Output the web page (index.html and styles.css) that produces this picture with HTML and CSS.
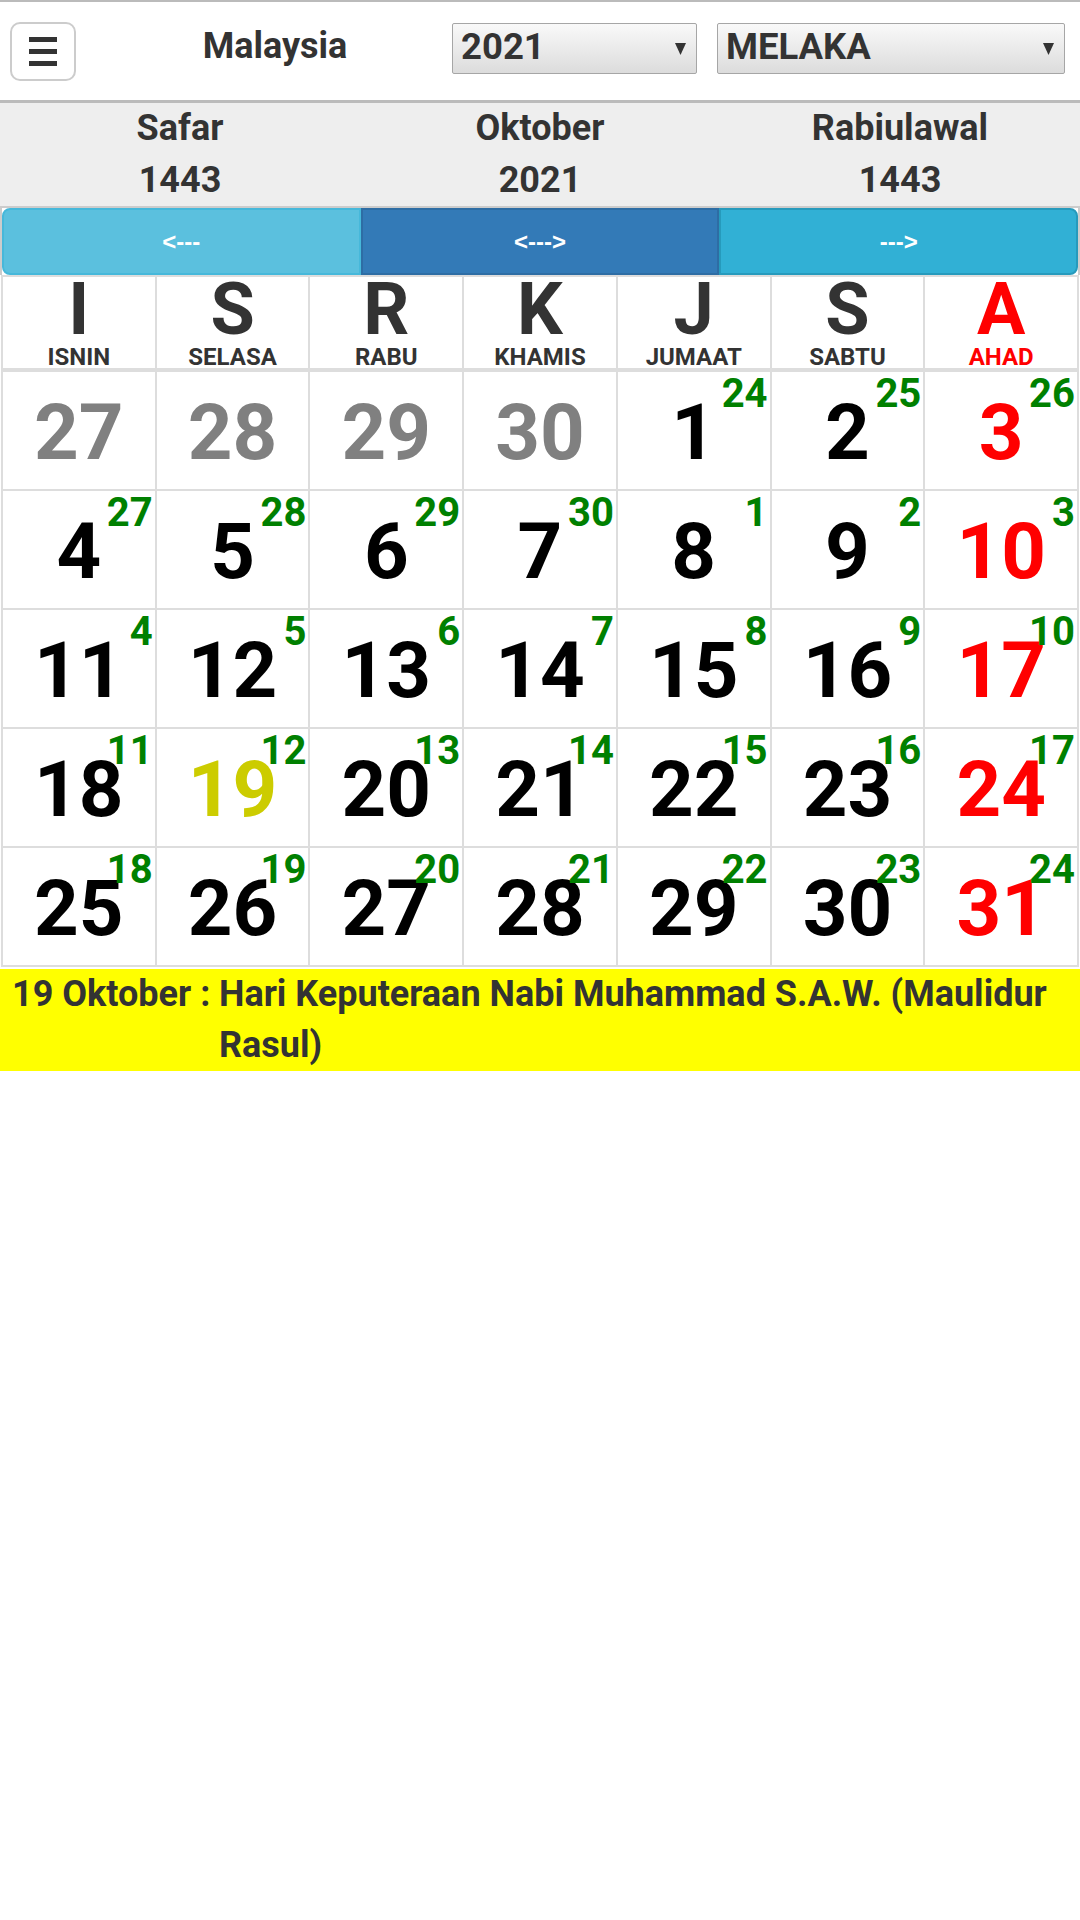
FILE: index.html
```html
<!DOCTYPE html>
<html>
<head>
<meta charset="utf-8">
<link rel="stylesheet" href="styles.css">
</head>
<body>
<div class="topbar">
  <div class="menu-btn"><span class="bar"></span><span class="bar"></span><span class="bar"></span></div>
  <div class="country">Malaysia</div>
  <div class="select year"><span class="sel-text">2021</span><svg class="arrow" width="11" height="12" viewBox="0 0 11 12"><polygon points="0,0 11,0 5.5,12" fill="#333"/></svg></div>
  <div class="select state"><span class="sel-text">MELAKA</span><svg class="arrow" width="11" height="12" viewBox="0 0 11 12"><polygon points="0,0 11,0 5.5,12" fill="#333"/></svg></div>
</div>
<div class="months">
  <div class="mcol">Safar<br>1443</div>
  <div class="mcol">Oktober<br>2021</div>
  <div class="mcol">Rabiulawal<br>1443</div>
</div>
<div class="nav">
  <div class="nbtn prev">&lt;---</div>
  <div class="nbtn now">&lt;---&gt;</div>
  <div class="nbtn next">---&gt;</div>
</div>
<div class="cal">
  <div class="hd"><div class="hl">I</div><div class="hn">ISNIN</div></div>
  <div class="hd"><div class="hl">S</div><div class="hn">SELASA</div></div>
  <div class="hd"><div class="hl">R</div><div class="hn">RABU</div></div>
  <div class="hd"><div class="hl">K</div><div class="hn">KHAMIS</div></div>
  <div class="hd"><div class="hl">J</div><div class="hn">JUMAAT</div></div>
  <div class="hd"><div class="hl">S</div><div class="hn">SABTU</div></div>
  <div class="hd sun"><div class="hl">A</div><div class="hn">AHAD</div></div>

  <div class="day other"><span class="d">27</span></div>
  <div class="day other"><span class="d">28</span></div>
  <div class="day other"><span class="d">29</span></div>
  <div class="day other"><span class="d">30</span></div>
  <div class="day"><span class="d">1</span><span class="h">24</span></div>
  <div class="day"><span class="d">2</span><span class="h">25</span></div>
  <div class="day sun"><span class="d">3</span><span class="h">26</span></div>

  <div class="day"><span class="d">4</span><span class="h">27</span></div>
  <div class="day"><span class="d">5</span><span class="h">28</span></div>
  <div class="day"><span class="d">6</span><span class="h">29</span></div>
  <div class="day"><span class="d">7</span><span class="h">30</span></div>
  <div class="day"><span class="d">8</span><span class="h">1</span></div>
  <div class="day"><span class="d">9</span><span class="h">2</span></div>
  <div class="day sun"><span class="d">10</span><span class="h">3</span></div>

  <div class="day"><span class="d">11</span><span class="h">4</span></div>
  <div class="day"><span class="d">12</span><span class="h">5</span></div>
  <div class="day"><span class="d">13</span><span class="h">6</span></div>
  <div class="day"><span class="d">14</span><span class="h">7</span></div>
  <div class="day"><span class="d">15</span><span class="h">8</span></div>
  <div class="day"><span class="d">16</span><span class="h">9</span></div>
  <div class="day sun"><span class="d">17</span><span class="h">10</span></div>

  <div class="day"><span class="d">18</span><span class="h">11</span></div>
  <div class="day holiday"><span class="d">19</span><span class="h">12</span></div>
  <div class="day"><span class="d">20</span><span class="h">13</span></div>
  <div class="day"><span class="d">21</span><span class="h">14</span></div>
  <div class="day"><span class="d">22</span><span class="h">15</span></div>
  <div class="day"><span class="d">23</span><span class="h">16</span></div>
  <div class="day sun"><span class="d">24</span><span class="h">17</span></div>

  <div class="day"><span class="d">25</span><span class="h">18</span></div>
  <div class="day"><span class="d">26</span><span class="h">19</span></div>
  <div class="day"><span class="d">27</span><span class="h">20</span></div>
  <div class="day"><span class="d">28</span><span class="h">21</span></div>
  <div class="day"><span class="d">29</span><span class="h">22</span></div>
  <div class="day"><span class="d">30</span><span class="h">23</span></div>
  <div class="day sun"><span class="d">31</span><span class="h">24</span></div>
</div>
<div class="notes">
  <div class="note-date">19 Oktober :</div>
  <div class="note-text">Hari Keputeraan Nabi Muhammad S.A.W. (Maulidur Rasul)</div>
</div>
</body>
</html>
```
FILE: styles.css
```css
* { box-sizing: border-box; }
html, body { margin: 0; padding: 0; background: #fff; }
body { font-family: Roboto, "Liberation Sans", sans-serif; color: #333; width: 1080px; }

.topbar {
  display: flex;
  align-items: flex-start;
  height: 103px;
  border-top: 2px solid #bbb;
  border-bottom: 3px solid #bbb;
  padding-top: 20px;
}
.menu-btn {
  margin-left: 10px;
  width: 66px;
  height: 59px;
  border: 2px solid #ccc;
  border-radius: 10px;
  background: #fff;
  display: flex;
  flex-direction: column;
  align-items: center;
  justify-content: center;
  gap: 7px;
}
.bar { display: block; width: 28px; height: 5px; background: #333; }
.country {
  width: 376px;
  padding-left: 22px;
  text-align: center;
  font-weight: bold;
  font-size: 36px;
  line-height: 49px;
  margin-top: 0;
}
.select {
  margin-top: 1px;
  height: 51px;
  border: 1px solid #a6a6a6;
  border-radius: 2px;
  background: linear-gradient(#f9f9f9, #dcdcdc);
  display: flex;
  align-items: center;
  justify-content: space-between;
  padding: 0 10px 0 8px;
}
.year { width: 245px; }
.state { width: 348px; margin-left: 20px; }
.sel-text { font-weight: bold; font-size: 36.5px; line-height: 44px; margin-bottom: 4px; color: #333; }
.arrow { display: block; }

.months {
  display: flex;
  background: #eee;
  border-bottom: 2px solid #ccc;
}
.mcol {
  flex: 1;
  text-align: center;
  font-weight: bold;
  font-size: 36px;
  line-height: 51.5px;
  color: #333;
}

.nav {
  display: flex;
  border-left: 2px solid #ccc;
  border-right: 2px solid #ccc;
}
.nbtn {
  flex: 1;
  height: 67px;
  display: flex;
  align-items: center;
  justify-content: center;
  color: #fff;
  font-family: "Liberation Sans", Arial, sans-serif;
  font-weight: bold;
  font-size: 24px;
  border: 2px solid;
}
.prev { background: #5bc0de; border-color: #46b8da; border-radius: 8px 0 0 8px; }
.now { background: #337ab7; border-color: #2e6da4; }
.next { background: #31b0d5; border-color: #269abc; border-radius: 0 8px 8px 0; }

.cal {
  display: grid;
  grid-template-columns: repeat(7, 1fr);
  width: 1078px;
  margin-left: 1px;
  border-top: 2px solid #ddd;
  border-left: 2px solid #ddd;
}
.hd {
  border-right: 2px solid #ddd;
  border-bottom: 4px solid #ddd;
  text-align: center;
  color: #333;
  font-weight: bold;
  padding-top: 4px;
  height: 95px;
}
.hl { font-size: 72px; line-height: 58px; }
.hn { font-size: 24px; line-height: 20px; margin-top: 8px; }
.hd.sun { color: #f00; }

.day {
  position: relative;
  border-right: 2px solid #ddd;
  border-bottom: 2px solid #ddd;
  height: 119px;
  padding-top: 7px;
  text-align: center;
  font-weight: bold;
}
.d { display: block; font-size: 78px; line-height: 108px; color: #000; }
.h {
  position: absolute;
  top: 2px;
  right: 2px;
  font-size: 40px;
  line-height: 40px;
  color: #008000;
}
.day.other .d { color: #808080; }
.day.sun .d { color: #f00; }
.day.holiday .d { color: #cccc00; }

.notes {
  display: flex;
  margin-top: 2px;
  background: #ff0;
  font-weight: bold;
  font-size: 36px;
  line-height: 51px;
  color: #333;
}
.note-date { width: 219px; padding-left: 12px; white-space: nowrap; flex: none; }
.note-text { flex: 1; }
```
